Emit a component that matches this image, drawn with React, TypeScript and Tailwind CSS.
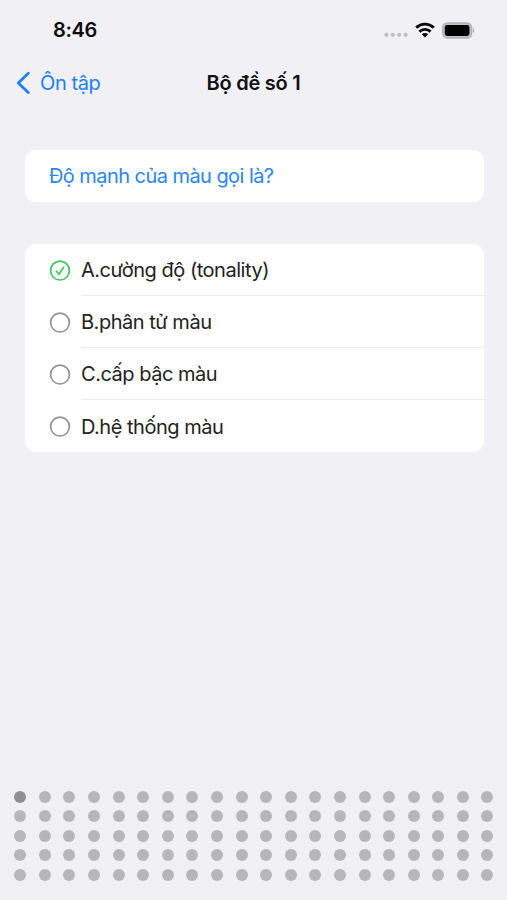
const COLS = 20
const ROWS = 5

const options = [
  { label: 'A.cường độ (tonality)', correct: true },
  { label: 'B.phân tử màu', correct: false },
  { label: 'C.cấp bậc màu', correct: false },
  { label: 'D.hệ thống màu', correct: false },
]

function StatusBar() {
  return (
    <div className="flex h-[60px] items-center justify-between pl-[53px] pr-[32px]">
      <span className="text-[20px] font-semibold tracking-[-0.3px] text-[#0b0b0c]">8:46</span>
      <div className="flex items-center">
        <svg width="24" height="6" viewBox="0 0 24 6" className="mt-[10px]" fill="#c0c0c4">
          <circle cx="2.4" cy="2.8" r="2.1" />
          <circle cx="8.8" cy="2.8" r="2.1" />
          <circle cx="15.2" cy="2.8" r="2.1" />
          <circle cx="21.6" cy="2.8" r="2.1" />
        </svg>
        <svg width="20" height="16" viewBox="0 0 20 16" className="ml-[7px]" fill="none" stroke="#0b0b0c" strokeWidth="2.9">
          <path d="M1.2 5.6a12.8 12.8 0 0 1 17.6 0" />
          <path d="M4.4 9.6a8.2 8.2 0 0 1 11.2 0" />
          <path d="M10 15.4l-3.2-3.2a4.6 4.6 0 0 1 6.4 0z" fill="#0b0b0c" stroke="none" />
        </svg>
        <svg width="33" height="17" viewBox="0 0 33 17" className="ml-[7px]">
          <rect x="0.7" y="1" width="28.9" height="15" rx="4.6" fill="#c3c3c6" stroke="#b3b3b7" strokeWidth="1.4" />
          <rect x="2.8" y="3" width="24.7" height="11" rx="2.4" fill="#000" />
          <path d="M30.8 5.9c2 .8 2 4.4 0 5.2z" fill="#b3b3b7" />
        </svg>
      </div>
    </div>
  )
}

function NavBar() {
  return (
    <div className="grid h-[46px] grid-cols-[1fr_auto_1fr] items-center">
      <div className="flex items-center pl-4 text-[#1a80fa]">
        <svg width="15" height="24" viewBox="0 0 15 24" fill="none" stroke="currentColor" strokeWidth="2.8" strokeLinecap="round" strokeLinejoin="round">
          <path d="M12.3 2.2L2.3 12l10 9.6" />
        </svg>
        <span className="ml-[9px] text-[20px] tracking-[-0.4px]">Ôn tập</span>
      </div>
      <h1 className="text-[20px] font-semibold tracking-[-0.25px] text-[#111]">Bộ đề số 1</h1>
      <div />
    </div>
  )
}

function OptionIcon({ correct }: { correct: boolean }) {
  return (
    <svg width="22" height="22" viewBox="0 0 22 22" className="mt-px" fill="none" stroke={correct ? '#40c865' : '#949497'} strokeWidth="1.7">
      <circle cx="11" cy="10.6" r="9.4" />
      {correct && <path d="M7.4 11.2l2.6 3.1 4.6-7" strokeLinecap="round" strokeLinejoin="round" />}
    </svg>
  )
}

export default function App() {
  return (
    <div className="flex h-[900px] w-[507px] flex-col bg-[#f1f0f5] font-[Inter,'Liberation_Sans',sans-serif]">
      <StatusBar />
      <NavBar />
      <main className="flex-1 pt-[44px] pr-[23.5px] pl-[24.5px]">
        <div className="flex h-[52px] items-center rounded-[11px] bg-white pl-[24.5px] text-[20px] tracking-[-0.56px] text-[#2b85f3]">
          Độ mạnh của màu gọi là?
        </div>
        <ul className="mt-[42px] overflow-hidden rounded-[11px] bg-white">
          {options.map((option, i) => (
            <li key={option.label} className="flex h-[52px] items-center pl-6">
              <OptionIcon correct={option.correct} />
              <span className={`ml-[10.5px] flex h-full flex-1 items-center pt-px text-[20px] tracking-[-0.48px] text-[#222] ${i < options.length - 1 ? 'border-b border-[#e9e9eb]' : ''}`}>
                {option.label}
              </span>
            </li>
          ))}
        </ul>
      </main>
      <div className="grid grid-cols-[repeat(20,12px)] justify-between gap-y-[7.4px] pr-[13.4px] pb-[19.4px] pl-[14.2px]">
        {Array.from({ length: COLS * ROWS }, (_, i) => (
          <span key={i} className={`size-3 rounded-full ${i === 0 ? 'bg-[#8e8e93]' : 'bg-[#b7b6bb]'}`} />
        ))}
      </div>
    </div>
  )
}
